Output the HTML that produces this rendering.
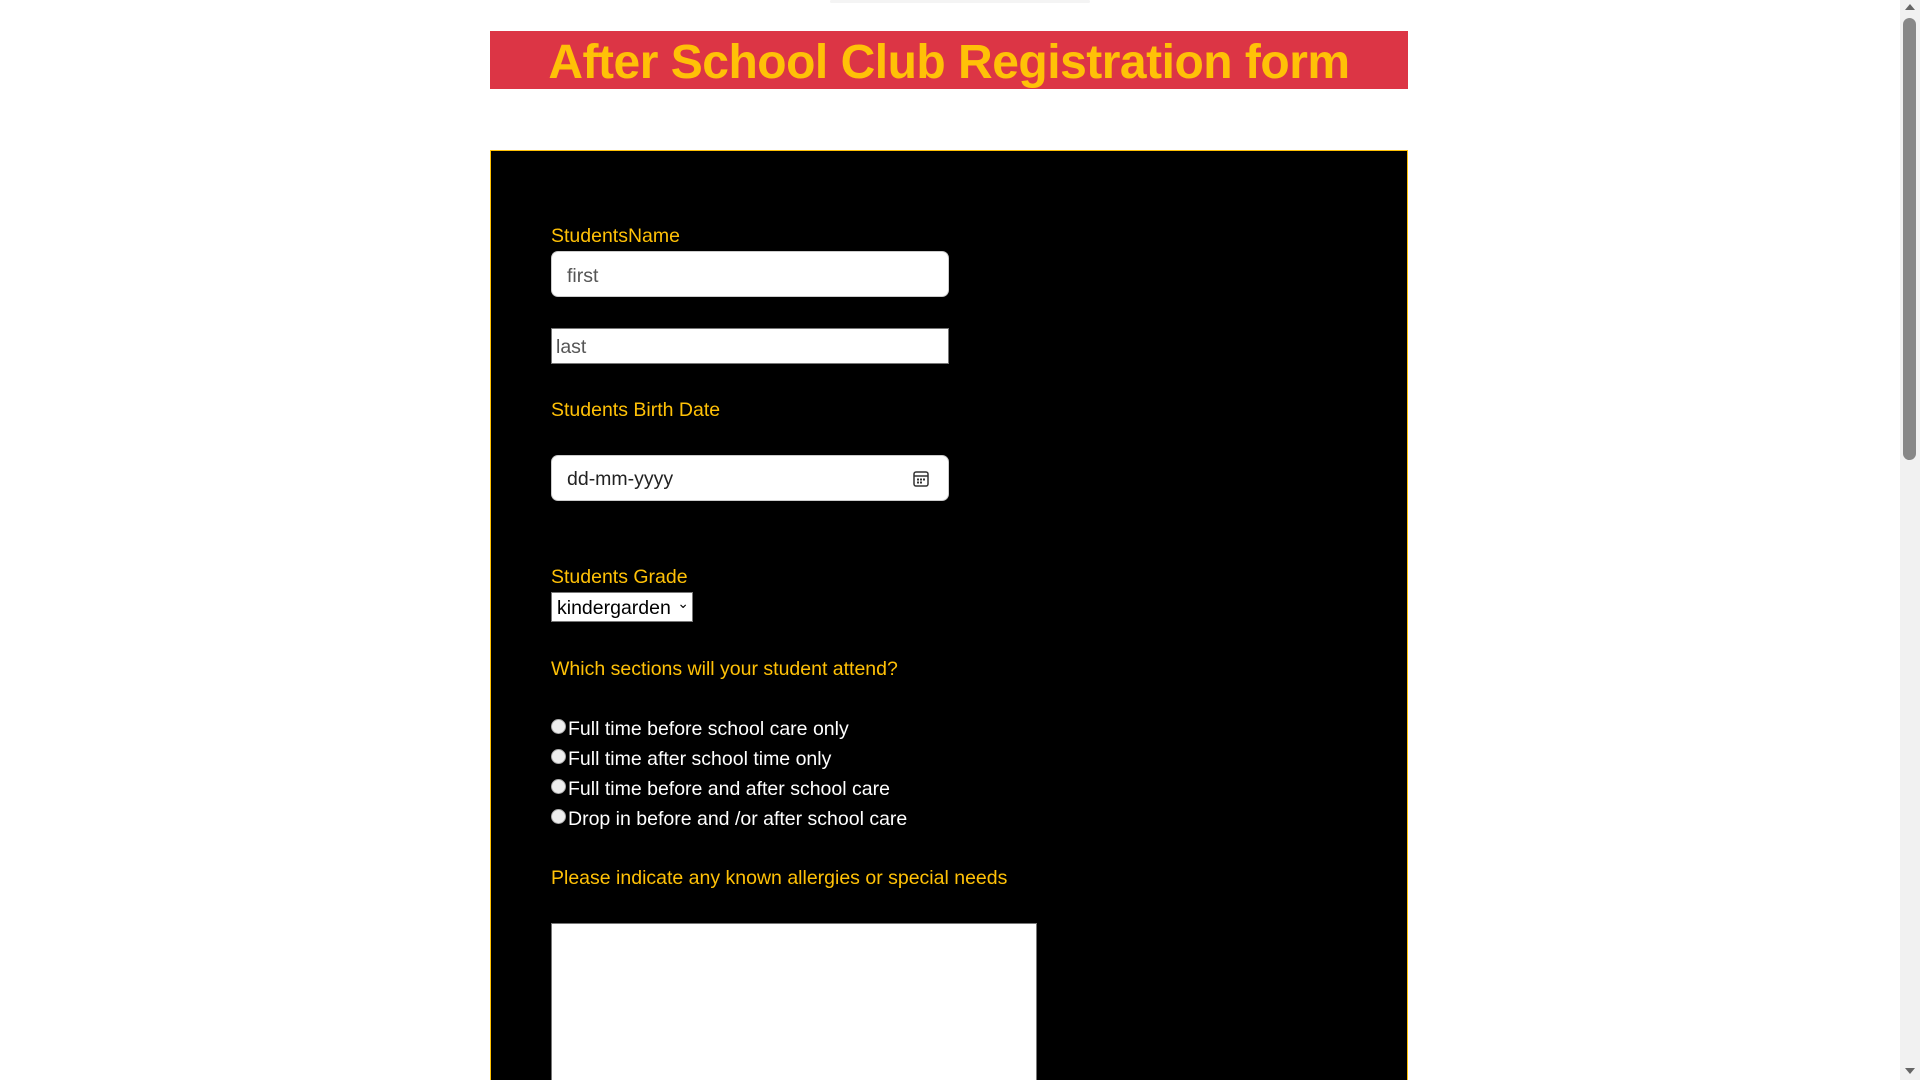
<!DOCTYPE html>
<html><head><meta charset="utf-8"><style>
html,body{margin:0;padding:0;background:#fff;width:1920px;height:1080px;overflow:hidden;font-family:"Liberation Sans",sans-serif;}
#wrap{position:relative;width:1920px;height:1080px;overflow:hidden;}
.abs{position:absolute;}
.hdr{left:490px;top:31px;width:918px;height:58px;background:#dc3545;color:#ffc107;font-size:48px;font-weight:bold;line-height:64px;text-align:center;letter-spacing:-0.5px;}
.box{left:490px;top:150px;width:916px;height:940px;background:#000;border:1px solid #ffc107;}
.lbl{color:#ffc107;font-size:19.5px;left:551px;}
.inp{left:551px;width:398px;background:#fff;box-sizing:border-box;font-size:19.5px;color:#555;}
.radio{left:551px;color:#fff;font-size:19.5px;}
.radio span{display:inline-block;width:13px;height:13px;border-radius:50%;background:#eee;border:1px solid #aaa;margin-right:2px;vertical-align:1px;}
.sb{left:1900px;top:0;width:20px;height:1080px;background:#f1f1f1;}
</style></head><body><div id="wrap">
<div class="abs" style="left:830px;top:0;width:260px;height:3px;background:#f4f4f4;border-radius:2px"></div>
<div class="abs hdr">After School Club Registration form</div>
<div class="abs box"></div>
<div class="abs lbl" style="top:225px">StudentsName</div>
<div class="abs inp" style="top:251px;height:46px;border-radius:7px;border:1px solid #ccc;padding:13px 15px">first</div>
<div class="abs inp" style="top:328px;height:36px;border:1px solid #777;padding:7px 4px">last</div>
<div class="abs lbl" style="top:399px">Students Birth Date</div>
<div class="abs inp" style="top:455px;height:46px;border-radius:7px;border:1px solid #ccc;padding:12px 15px;color:#222">dd-mm-yyyy
<svg style="position:absolute;right:18px;top:14px" width="18" height="18" viewBox="0 0 18 18"><rect x="2" y="2" width="14" height="14" rx="2" fill="none" stroke="#333" stroke-width="1.5"/><line x1="2" y1="6" x2="16" y2="6" stroke="#333" stroke-width="1.5"/><g fill="#333"><rect x="5" y="8.5" width="2" height="2"/><rect x="8" y="8.5" width="2" height="2"/><rect x="11" y="8.5" width="2" height="2"/><rect x="5" y="11.5" width="2" height="2"/><rect x="8" y="11.5" width="2" height="2"/></g></svg></div>
<div class="abs lbl" style="top:566px">Students Grade</div>
<div class="abs" style="left:551px;top:592px;width:142px;height:30px;box-sizing:border-box;background:#fff;border:1px solid #777;font-size:19.5px;color:#000;padding:4px 5px">kindergarden<span style="position:absolute;right:3px;top:2px;font-size:14px">&#8964;</span></div>
<div class="abs lbl" style="top:658px">Which sections will your student attend?</div>
<div class="abs radio" style="top:718px"><span></span>Full time before school care only</div>
<div class="abs radio" style="top:748px"><span></span>Full time after school time only</div>
<div class="abs radio" style="top:778px"><span></span>Full time before and after school care</div>
<div class="abs radio" style="top:808px"><span></span>Drop in before and /or after school care</div>
<div class="abs lbl" style="top:867px">Please indicate any known allergies or special needs</div>
<div class="abs" style="left:551px;top:923px;width:486px;height:200px;background:#fff;border:1px solid #777;box-sizing:border-box"></div>
<div class="abs sb"></div>
<div class="abs" style="left:1903px;top:18px;width:13px;height:442px;background:#888;border-radius:7px"></div>
<div class="abs" style="left:1905px;top:4px;width:0;height:0;border-left:5px solid transparent;border-right:5px solid transparent;border-bottom:6px solid #666"></div>
<div class="abs" style="left:1905px;top:1068px;width:0;height:0;border-left:5px solid transparent;border-right:5px solid transparent;border-top:6px solid #666"></div>
</div></body></html>
